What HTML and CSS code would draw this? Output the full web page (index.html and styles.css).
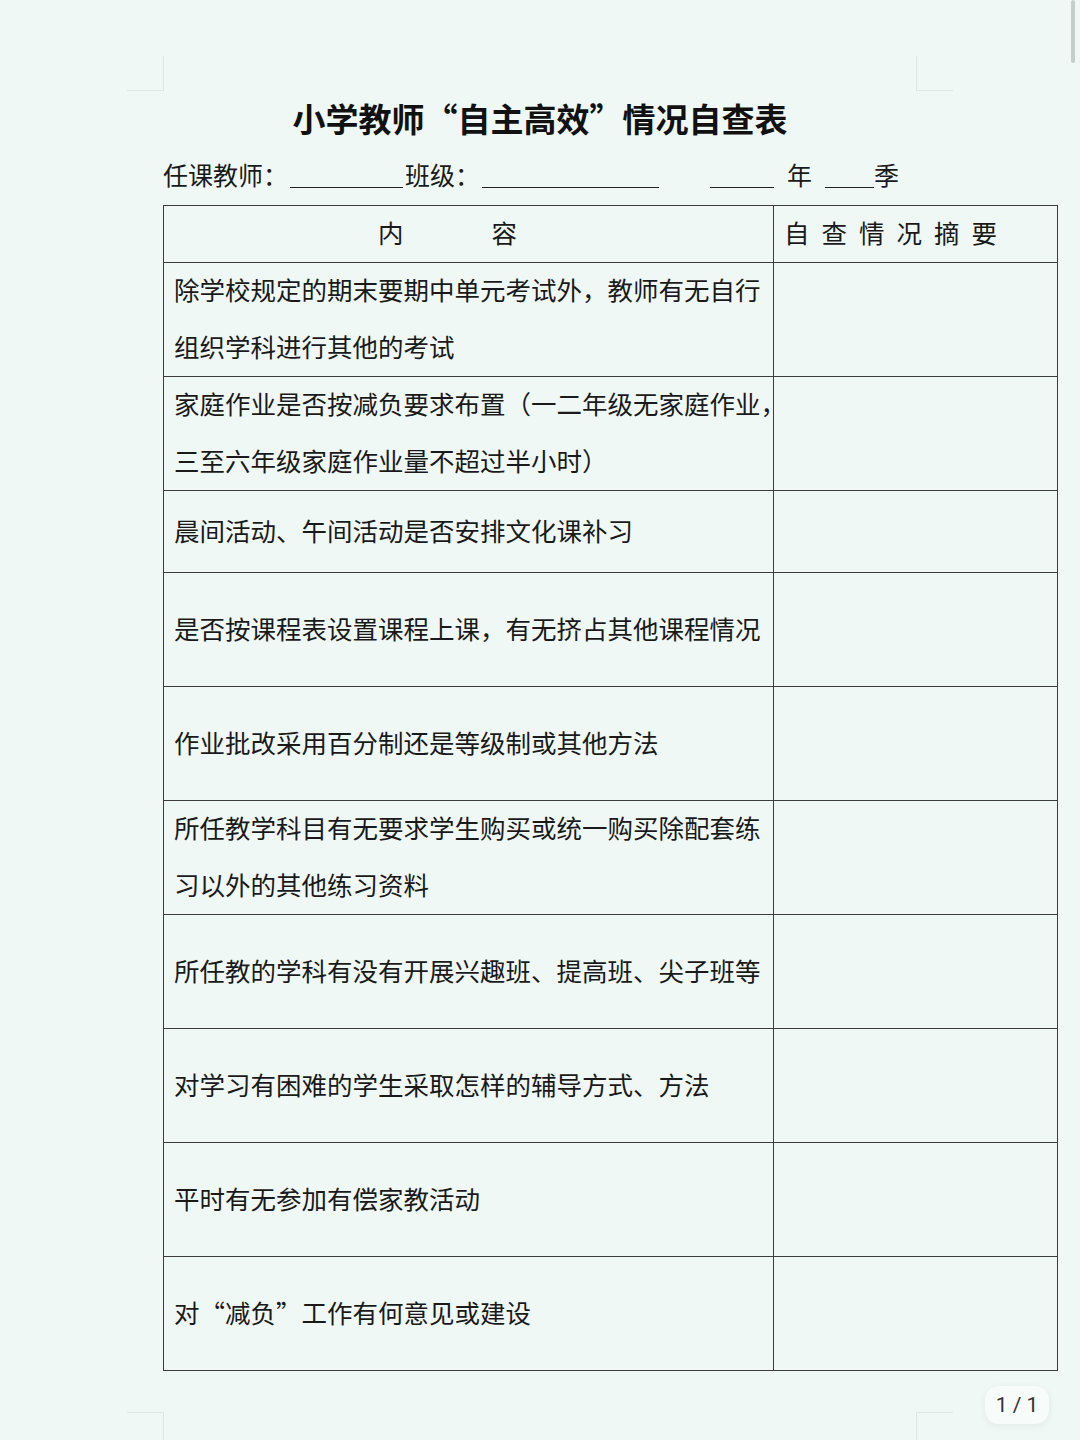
FILE: index.html
```html
<!DOCTYPE html>
<html lang="zh-Hans">
<head>
<meta charset="utf-8">
<title>小学教师“自主高效”情况自查表</title>
<link rel="stylesheet" href="styles.css">
</head>
<body>
<div class="viewer">
  <div class="page">
    <span class="mark mark-tl"></span>
    <span class="mark mark-tr"></span>
    <span class="mark mark-bl"></span>
    <span class="mark mark-br"></span>

    <h1 class="title">小学教师“自主高效”情况自查表</h1>

    <div class="info">
      <span class="label">任课教师：</span><span class="blank blank-teacher"></span><span class="label">班级：</span><span class="blank blank-class"></span><span class="blank blank-year"></span><span class="label label-year">年</span><span class="blank blank-season"></span><span class="label">季</span>
    </div>

    <table class="sheet">
      <colgroup>
        <col class="col-content">
        <col class="col-summary">
      </colgroup>
      <thead>
        <tr class="row-head">
          <th class="head-content"><span class="txt"><span class="h-a">内</span><span class="h-b">容</span></span></th>
          <th class="head-summary"><span class="txt">自查情况摘要</span></th>
        </tr>
      </thead>
      <tbody>
        <tr class="row-tall">
          <td class="cell"><span class="txt">除学校规定的期末要期中单元考试外，教师有无自行<br>组织学科进行其他的考试</span></td>
          <td class="cell-empty"></td>
        </tr>
        <tr class="row-tall">
          <td class="cell"><span class="txt">家庭作业是否按减负要求布置（一二年级无家庭作业，<br>三至六年级家庭作业量不超过半小时）</span></td>
          <td class="cell-empty"></td>
        </tr>
        <tr class="row-short">
          <td class="cell"><span class="txt">晨间活动、午间活动是否安排文化课补习</span></td>
          <td class="cell-empty"></td>
        </tr>
        <tr class="row-tall">
          <td class="cell"><span class="txt">是否按课程表设置课程上课，有无挤占其他课程情况</span></td>
          <td class="cell-empty"></td>
        </tr>
        <tr class="row-tall">
          <td class="cell"><span class="txt">作业批改采用百分制还是等级制或其他方法</span></td>
          <td class="cell-empty"></td>
        </tr>
        <tr class="row-tall">
          <td class="cell"><span class="txt">所任教学科目有无要求学生购买或统一购买除配套练<br>习以外的其他练习资料</span></td>
          <td class="cell-empty"></td>
        </tr>
        <tr class="row-tall">
          <td class="cell"><span class="txt">所任教的学科有没有开展兴趣班、提高班、尖子班等</span></td>
          <td class="cell-empty"></td>
        </tr>
        <tr class="row-tall">
          <td class="cell"><span class="txt">对学习有困难的学生采取怎样的辅导方式、方法</span></td>
          <td class="cell-empty"></td>
        </tr>
        <tr class="row-tall">
          <td class="cell"><span class="txt">平时有无参加有偿家教活动</span></td>
          <td class="cell-empty"></td>
        </tr>
        <tr class="row-tall">
          <td class="cell"><span class="txt">对“减负”工作有何意见或建设</span></td>
          <td class="cell-empty"></td>
        </tr>
      </tbody>
    </table>
  </div>

  <div class="pager">1 / 1</div>
  <div class="scrollbar"></div>
</div>
</body>
</html>
```

FILE: styles.css
```css
html, body {
  margin: 0;
  padding: 0;
}

body {
  background: #eff8f5;
  color: #1a1a1a;
  font-family: "Noto Sans CJK SC", "Noto Sans", sans-serif;
  width: 1080px;
  height: 1440px;
  overflow: hidden;
}

.viewer {
  position: relative;
  width: 1080px;
  height: 1440px;
}

.page {
  position: relative;
  padding: 94px 0 0 163px;
}

/* crop marks */
.mark {
  position: absolute;
  border-color: #dfe6e3;
  border-style: solid;
  border-width: 0;
  width: 36px;
  height: 34px;
}
.mark-tl {
  left: 127px;
  top: 56px;
  border-right-width: 1px;
  border-bottom-width: 1px;
}
.mark-tr {
  left: 916px;
  top: 56px;
  border-left-width: 1px;
  border-bottom-width: 1px;
}
.mark-bl {
  left: 127px;
  top: 1412px;
  border-right-width: 1px;
  border-top-width: 1px;
}
.mark-br {
  left: 916px;
  top: 1412px;
  border-left-width: 1px;
  border-top-width: 1px;
}

.title {
  margin: 0 0 0 -163px;
  width: 1080px;
  text-align: center;
  font-size: 33px;
  line-height: 48px;
  font-weight: 700;
  color: #111;
}

.info {
  display: flex;
  align-items: baseline;
  margin-top: 12px;
  height: 40px;
  font-size: 25px;
  line-height: 40px;
  color: #1a1a1a;
}

.blank {
  display: inline-block;
  height: 20px;
  border-bottom: 1.5px solid #222;
  vertical-align: -3px;
  position: relative;
  top: 3px;
}
.blank-teacher {
  width: 113px;
  margin-left: 2px;
  margin-right: 2px;
}
.blank-class {
  width: 177px;
  margin-left: 2px;
}
.blank-year {
  width: 64px;
  margin-left: 51px;
}
.label-year {
  margin: 0 13px;
}
.blank-season {
  width: 49px;
}

.sheet {
  margin-top: 11px;
  width: 894px;
  border-collapse: collapse;
  table-layout: fixed;
  font-size: 25.5px;
  line-height: 57px;
}

.col-content {
  width: 610px;
}
.col-summary {
  width: 284px;
}

.sheet th,
.sheet td {
  border: 1.5px solid #3c3c3c;
  padding: 0;
  vertical-align: middle;
  text-align: left;
  font-weight: 400;
}

.txt {
  display: block;
  margin-top: -5px;
}

.row-head {
  height: 57px;
}
.head-content {
  padding-left: 214px !important;
  white-space: nowrap;
}
.h-b {
  margin-left: 88px;
}
.head-summary {
  padding-left: 10px !important;
  letter-spacing: 12px;
  white-space: nowrap;
}

.row-tall {
  height: 114px;
}
.row-short {
  height: 82px;
}

.cell {
  padding-left: 10px !important;
  white-space: nowrap;
}

.pager {
  position: absolute;
  left: 985px;
  top: 1386px;
  width: 64px;
  height: 38px;
  border-radius: 14px;
  background: #f7fbfa;
  box-shadow: 0 2px 8px rgba(0, 0, 0, 0.06);
  font-family: "Roboto", "Noto Sans", sans-serif;
  font-size: 21px;
  line-height: 38px;
  text-align: center;
  color: #333;
}

.scrollbar {
  position: absolute;
  left: 1071px;
  top: 0;
  width: 4px;
  height: 63px;
  border-radius: 2px;
  background: #c9cccb;
}
```
